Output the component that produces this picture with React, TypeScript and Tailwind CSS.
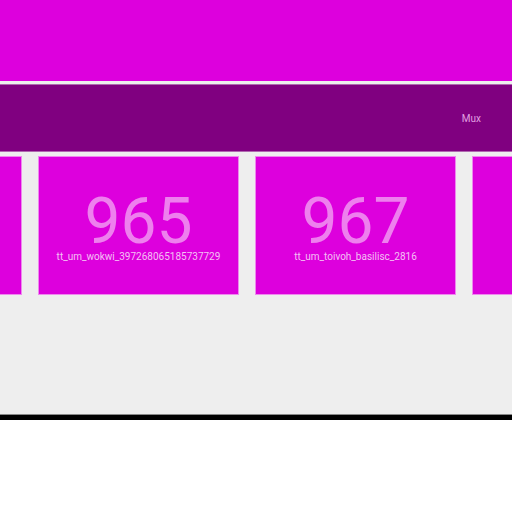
const tiles = [
  { num: "963", name: "tt_um_example_963" },
  { num: "965", name: "tt_um_wokwi_397268065185737729" },
  { num: "967", name: "tt_um_toivoh_basilisc_2816" },
  { num: "969", name: "tt_um_example_969" },
];

function Tile({ num, name }: { num: string; name: string }) {
  return (
    <div className="flex h-full w-[201px] shrink-0 flex-col items-center justify-center overflow-hidden border border-[#ee88ee] bg-[#dd00dd] pt-[3px]">
      <div className="text-[64px] font-normal leading-[60px] text-[#ee80ee]">{num}</div>
      <div className="whitespace-nowrap text-[10px] leading-[10px] text-[#f4c0f4]">{name}</div>
    </div>
  );
}

export default function App() {
  return (
    <div className="bg-white font-['Roboto',sans-serif]">
      <div className="flex h-[414px] flex-col overflow-hidden bg-[#eeeeee]">
        <div className="h-[81px] shrink-0 bg-[#dd00dd]" />
        <div className="mt-[3px] flex h-[68px] shrink-0 items-center justify-end border-t border-b border-[#b068b0] bg-[#800080] pr-[31px]">
          <span className="text-[10px] text-[#e0a0e0]">Mux</span>
        </div>
        <div className="mt-[4px] ml-[-179px] flex h-[139px] shrink-0 gap-[16px]">
          {tiles.map((t) => (
            <Tile key={t.num} num={t.num} name={t.name} />
          ))}
        </div>
      </div>
      <div className="h-[6px] border-t border-[#888888] bg-black" />
    </div>
  );
}
